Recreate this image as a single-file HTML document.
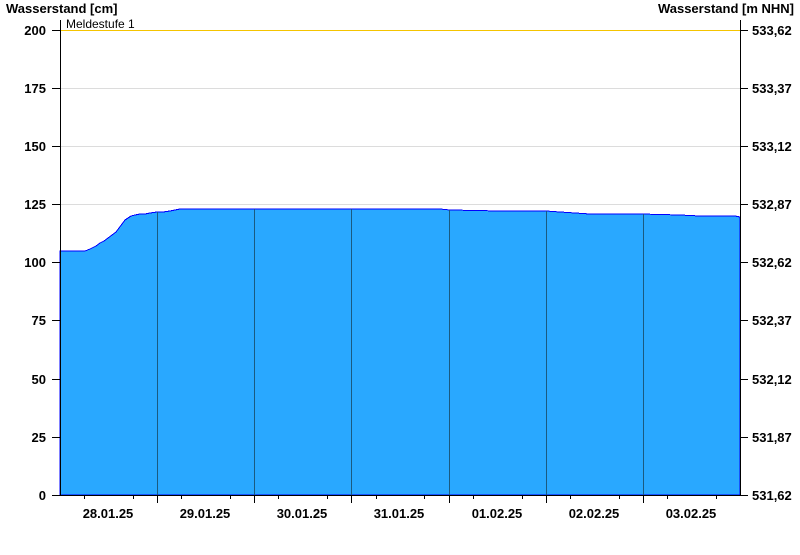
<!DOCTYPE html>
<html><head><meta charset="utf-8"><style>
body{margin:0;background:#fff;width:800px;height:550px;overflow:hidden}
svg text{font-family:"Liberation Sans",Arial,sans-serif;font-size:13px;font-weight:bold;fill:#000}
</style></head><body>
<svg width="800" height="550" xmlns="http://www.w3.org/2000/svg" shape-rendering="crispEdges">
<text x="6" y="13">Wasserstand [cm]</text>
<text x="794" y="13" text-anchor="end">Wasserstand [m NHN]</text>
<g stroke="#dcdcdc" stroke-width="1">
<line x1="60" y1="88.5" x2="740" y2="88.5"/><line x1="60" y1="146.5" x2="740" y2="146.5"/>
<line x1="60" y1="204.5" x2="740" y2="204.5"/><line x1="60" y1="262.5" x2="740" y2="262.5"/>
<line x1="60" y1="320.5" x2="740" y2="320.5"/><line x1="60" y1="379.5" x2="740" y2="379.5"/>
<line x1="60" y1="437.5" x2="740" y2="437.5"/>
</g>
<line x1="60" y1="30.5" x2="740" y2="30.5" stroke="#f5c400" stroke-width="1"/>
<text x="66" y="28" style="font-weight:normal;font-size:12px">Meldestufe 1</text>
<polygon fill="#29a8ff" stroke="#0000ff" stroke-width="1" points="60,495 60,251 85,251 90,249 92,248 96,246 100,243 104,241 108,238 112,235 116,232 119,228 122,224 125,220 128,218 131,216 135,215 140,214 145,214 150,213 157,212 163,212 170,211 175,210 180,209 440,209 450,210 500,211 546,211 560,212 590,214 640,214 680,215 700,216 735,216 740,217 740,495"/>
<g stroke="#1a5a80" stroke-width="1">
<line x1="157.5" y1="212" x2="157.5" y2="495"/><line x1="254.5" y1="209" x2="254.5" y2="495"/>
<line x1="351.5" y1="209" x2="351.5" y2="495"/><line x1="449.5" y1="210" x2="449.5" y2="495"/>
<line x1="546.5" y1="211" x2="546.5" y2="495"/><line x1="643.5" y1="214" x2="643.5" y2="495"/>
</g>
<g stroke="#000" stroke-width="1">
<line x1="60.5" y1="20" x2="60.5" y2="495"/><line x1="740.5" y1="20" x2="740.5" y2="495"/>
<line x1="60" y1="495.5" x2="741" y2="495.5"/>
<line x1="52" y1="30.5" x2="60" y2="30.5"/><line x1="52" y1="88.5" x2="60" y2="88.5"/><line x1="52" y1="146.5" x2="60" y2="146.5"/><line x1="52" y1="204.5" x2="60" y2="204.5"/><line x1="52" y1="262.5" x2="60" y2="262.5"/><line x1="52" y1="320.5" x2="60" y2="320.5"/><line x1="52" y1="379.5" x2="60" y2="379.5"/><line x1="52" y1="437.5" x2="60" y2="437.5"/><line x1="52" y1="495.5" x2="60" y2="495.5"/>
<line x1="740" y1="30.5" x2="748" y2="30.5"/><line x1="740" y1="88.5" x2="748" y2="88.5"/><line x1="740" y1="146.5" x2="748" y2="146.5"/><line x1="740" y1="204.5" x2="748" y2="204.5"/><line x1="740" y1="262.5" x2="748" y2="262.5"/><line x1="740" y1="320.5" x2="748" y2="320.5"/><line x1="740" y1="379.5" x2="748" y2="379.5"/><line x1="740" y1="437.5" x2="748" y2="437.5"/><line x1="740" y1="495.5" x2="748" y2="495.5"/>
<line x1="157.5" y1="495" x2="157.5" y2="503"/><line x1="254.5" y1="495" x2="254.5" y2="503"/><line x1="351.5" y1="495" x2="351.5" y2="503"/><line x1="449.5" y1="495" x2="449.5" y2="503"/><line x1="546.5" y1="495" x2="546.5" y2="503"/><line x1="643.5" y1="495" x2="643.5" y2="503"/>
<line x1="84.5" y1="495" x2="84.5" y2="499"/><line x1="133.5" y1="495" x2="133.5" y2="499"/>
<line x1="181.5" y1="495" x2="181.5" y2="499"/><line x1="230.5" y1="495" x2="230.5" y2="499"/>
<line x1="278.5" y1="495" x2="278.5" y2="499"/><line x1="327.5" y1="495" x2="327.5" y2="499"/>
<line x1="376.5" y1="495" x2="376.5" y2="499"/><line x1="424.5" y1="495" x2="424.5" y2="499"/>
<line x1="473.5" y1="495" x2="473.5" y2="499"/><line x1="522.5" y1="495" x2="522.5" y2="499"/>
<line x1="570.5" y1="495" x2="570.5" y2="499"/><line x1="619.5" y1="495" x2="619.5" y2="499"/>
<line x1="667.5" y1="495" x2="667.5" y2="499"/><line x1="716.5" y1="495" x2="716.5" y2="499"/>
</g>
<g text-anchor="end">
<text x="46" y="35">200</text><text x="46" y="93">175</text><text x="46" y="151">150</text><text x="46" y="209">125</text><text x="46" y="267">100</text><text x="46" y="325">75</text><text x="46" y="384">50</text><text x="46" y="442">25</text><text x="46" y="500">0</text>
</g>
<g>
<text x="752" y="35">533,62</text><text x="752" y="93">533,37</text><text x="752" y="151">533,12</text><text x="752" y="209">532,87</text><text x="752" y="267">532,62</text><text x="752" y="325">532,37</text><text x="752" y="384">532,12</text><text x="752" y="442">531,87</text><text x="752" y="500">531,62</text>
</g>
<g text-anchor="middle">
<text x="108" y="518">28.01.25</text><text x="205" y="518">29.01.25</text><text x="302" y="518">30.01.25</text><text x="399" y="518">31.01.25</text><text x="497" y="518">01.02.25</text><text x="594" y="518">02.02.25</text><text x="691" y="518">03.02.25</text>
</g>
</svg>
</body></html>
